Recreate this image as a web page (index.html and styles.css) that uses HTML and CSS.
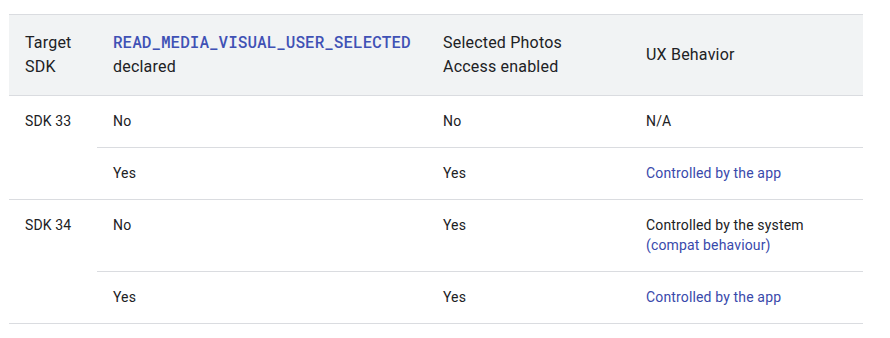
FILE: index.html
```html
<!DOCTYPE html>
<html lang="en">
<head>
  <meta charset="UTF-8">
  <meta name="viewport" content="width=device-width, initial-scale=1.0">
  <title>Selected Photos Access</title>
  <link rel="stylesheet" href="styles.css">
</head>
<body>
  <table class="access-table">
    <thead>
      <tr>
        <th class="col-sdk">Target SDK</th>
        <th class="col-declared"><a href="#"><code>READ_MEDIA_VISUAL_USER_SELECTED</code></a> declared</th>
        <th class="col-enabled">Selected Photos Access enabled</th>
        <th class="col-ux">UX Behavior</th>
      </tr>
    </thead>
    <tbody>
      <tr>
        <td rowspan="2">SDK 33</td>
        <td>No</td>
        <td>No</td>
        <td>N/A</td>
      </tr>
      <tr>
        <td>Yes</td>
        <td>Yes</td>
        <td><a href="#">Controlled by the app</a></td>
      </tr>
      <tr>
        <td rowspan="2">SDK 34</td>
        <td>No</td>
        <td>Yes</td>
        <td>Controlled by the system<br><a href="#">(compat behaviour)</a></td>
      </tr>
      <tr>
        <td>Yes</td>
        <td>Yes</td>
        <td><a href="#">Controlled by the app</a></td>
      </tr>
    </tbody>
  </table>
</body>
</html>
```
FILE: styles.css
```css
/* Base */
body {
  margin: 0;
  padding: 14px 27px 0 9px;
  background-color: #fff;
  font-family: Roboto, 'Liberation Sans', sans-serif;
  color: #202124;
}

a {
  color: #3949ab;
  text-decoration: none;
}

/* Table */
.access-table {
  width: 854px;
  border-collapse: collapse;
  table-layout: fixed;
  border-top: 1px solid #dadce0;
}

.access-table th,
.access-table td {
  text-align: left;
  vertical-align: top;
  padding: 16px 16px;
  border-bottom: 1px solid #dadce0;
}

.access-table th {
  background-color: #f1f3f4;
  font-size: 16px;
  font-weight: 400;
  line-height: 24px;
  letter-spacing: 0.2px;
  vertical-align: middle;
}

.access-table td {
  font-size: 14px;
  font-weight: 400;
  line-height: 20px;
  letter-spacing: 0.15px;
  padding-top: 15px;
  padding-bottom: 16px;
}

.access-table code {
  font-family: 'Roboto Mono', 'DejaVu Sans Mono', 'Liberation Mono', monospace;
  font-size: 16px;
  line-height: 1;
  letter-spacing: 0;
  font-weight: 500;
  color: #3f51b5;
}

/* Column widths */
.col-sdk { width: 56px; }
.col-declared { width: 298px; }
.col-enabled { width: 171px; }
.col-ux { width: 201px; }
```
